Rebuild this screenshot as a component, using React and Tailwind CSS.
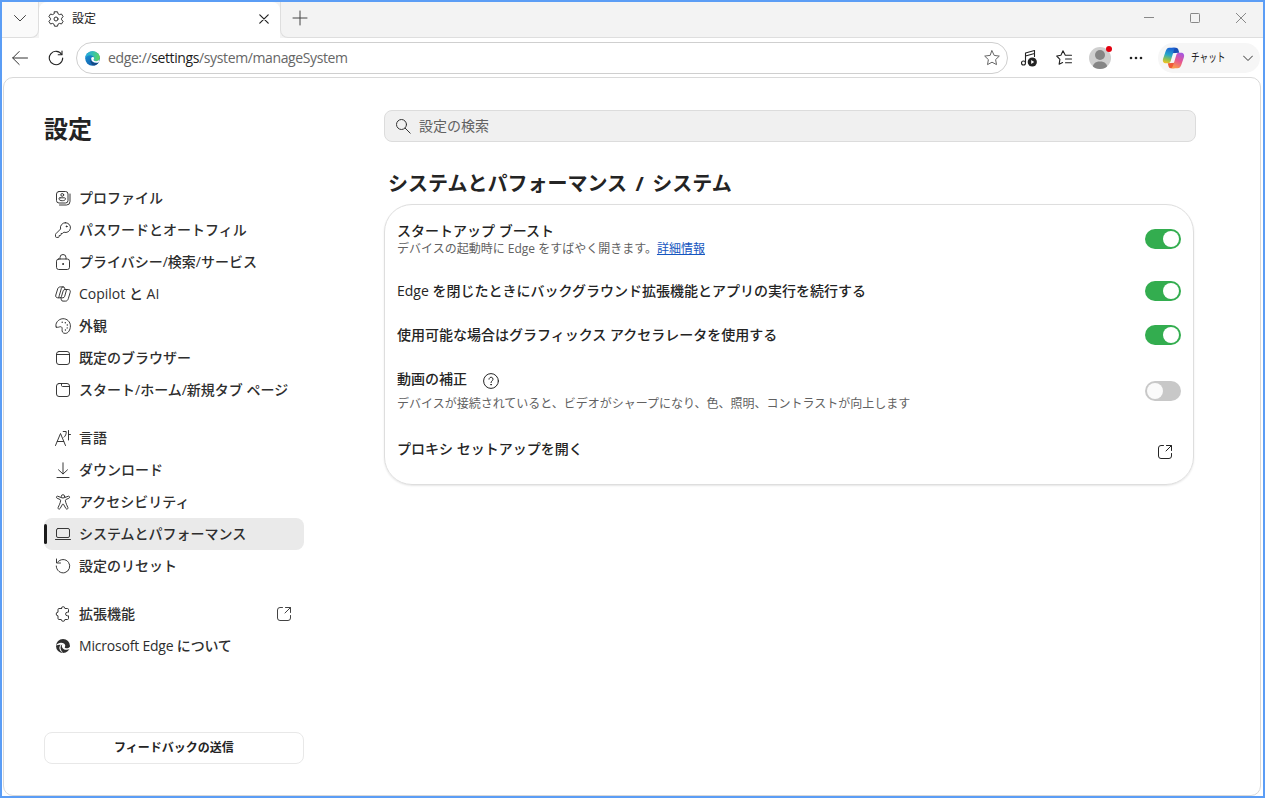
import React, { useState } from 'react';

const Icon = ({ children, size = 16, box = 16, sw = 1, className = '' }) => (
  <svg
    width={size}
    height={size}
    viewBox={`0 0 ${box} ${box}`}
    fill="none"
    stroke="currentColor"
    strokeWidth={sw}
    strokeLinecap="round"
    strokeLinejoin="round"
    className={`shrink-0 ${className}`}
  >
    {children}
  </svg>
);

const icons = {
  profile: (
    <>
      <rect x="1.5" y="1.5" width="11.5" height="11.5" rx="2.5" />
      <path d="M15 4v7.5a3.5 3.5 0 0 1-3.5 3.5H4.5" />
      <circle cx="7.25" cy="4.9" r="1.4" />
      <path d="M5 7.8h4.5c.6 0 1 .4 1 .9 0 1.4-1.4 2-3.25 2S4 10.1 4 8.7c0-.5.4-.9 1-.9Z" />
    </>
  ),
  key: (
    <>
      <path d="M10.3.7a4.900 4.900 0 0 0-4.700 6.300L.8 11.800c-.2.200-.3.400-.3.700v1.900c0 .6.400 1 1 1h1.700c.6 0 1-.4 1-1v-.9h1c.5 0 .9-.4.9-.9v-1.100h1c.3 0 .5-.1.7-.3l1.100-1a4.900 4.900 0 1 0 1.400-9.500Z" />
      <circle cx="11.6" cy="4.4" r=".5" fill="currentColor" />
    </>
  ),
  lock: (
    <>
      <rect x="1.5" y="5" width="13" height="10.5" rx="2.2" />
      <path d="M5 5V3.500a3 3 0 0 1 6 0V5" />
      <circle cx="8" cy="10" r=".5" fill="currentColor" />
    </>
  ),
  copilot: (
    <>
      <path d="M10 3.500 9.700 2.100A1.700 1.700 0 0 0 8 .9H5.300C4 .9 3.100 1.600 2.700 2.900L.8 9c-.5 1.600.4 2.800 1.900 2.800h1.800c1 0 1.700-.5 2-1.500L8.200 4.800c.3-.9.900-1.300 1.800-1.300h3.300c1.500 0 2.400 1.200 1.900 2.800l-1.900 6.400c-.4 1.300-1.300 2.400-2.600 2.400H8a1.700 1.700 0 0 1-1.700-1.200L5.800 11.500" />
      <path d="M8.200.9C7.300.9 6.700 1.400 6.400 2.300L4.200 9.800c-.3.900-.3 1.400-.3 2M11.600 3.500 9.700 10.300c-.3.900-.9 1.500-1.800 1.500H6" />
    </>
  ),
  palette: (
    <>
      <path d="M1.2 9.100C-.4 5.600 3.200.9 7.900.7c4.300-.1 7.500 3.200 7.500 7.200 0 4.100-2.200 7.500-5.200 7.500-2.500 0-3.400-1.900-3.100-4 .2-1.600-.3-2.700-1.500-2.700-1.300 0-2.700 1.200-4.400.4Z" />
      <g fill="currentColor" stroke="none">
        <circle cx="7.2" cy="4.2" r=".7" />
        <circle cx="10.3" cy="4.7" r=".7" />
        <circle cx="12.3" cy="7" r=".7" />
        <circle cx="12.2" cy="9.9" r=".7" />
        <circle cx="10.4" cy="12" r=".7" />
      </g>
    </>
  ),
  browser: (
    <>
      <rect x="1.5" y="1.5" width="13" height="13" rx="2.5" />
      <path d="M1.500 4.500h13" />
    </>
  ),
  page: (
    <>
      <rect x="1.5" y="1.5" width="13" height="13" rx="2.5" />
      <path d="M6.500 1.500v2c0 .6.400 1 1 1h7" />
    </>
  ),
  language: (
    <>
      <path d="M.5 15.500 5.500 3.500l5 12M2.300 11.500h6.400" />
      <path d="M8.200 1.500h3c.2 2.500-.7 4.500-2.200 5.700M13.500.5v9.500M13.500 4.500h2" />
    </>
  ),
  download: <path d="M8 .8v11M3.500 7.800 8 12l4.500-4.200M2 15.500h12" />,
  accessibility: (
    <>
      <circle cx="8" cy="2.400" r="1.700" />
      <path d="M6.300 3.600 3 2.300c-1.500-.6-2.300 1.300-.9 1.900L5 5.500c.5.200.7.600.6 1.100-.2 2.500-1.700 4.900-2.500 7-.5 1.400 1.500 2.100 2 .9L7.500 10.300c.2-.5.800-.5 1 0l2.400 4.200c.5 1.200 2.500.5 2-.9-.8-2.100-2.300-4.500-2.500-7-.1-.5.1-.9.600-1.100l2.900-1.300c1.400-.6.600-2.500-.9-1.900L9.700 3.600" />
    </>
  ),
  laptop: (
    <>
      <rect x="1.5" y="2.500" width="13" height="9" rx="1.500" />
      <path d="M.5 13.500h15" />
    </>
  ),
  reset: (
    <>
      <path d="M2.600 4.200A6.700 6.700 0 1 1 1.300 8" />
      <path d="M1.500 1v4h4" />
    </>
  ),
  puzzle: (
    <path d="M6.300 2.500a1.800 1.800 0 0 1 3.600 0h2.600c.6 0 1 .4 1 1v2.700h-1.100a1.700 1.700 0 0 0 0 3.600h1.100v2.700c0 .6-.4 1-1 1H9.900a1.800 1.800 0 0 1-3.600 0H4c-.6 0-1-.4-1-1V9.800a1.800 1.800 0 0 1 0-3.600V3.500c0-.6.4-1 1-1h2.300Z" />
  ),
  edge: (
    <>
      <circle cx="8" cy="8" r="7" fill="currentColor" stroke="none" />
      <path d="M1.200 7.500C2.500 4.800 6.500 3.800 9 5.600c1.600 1.200 1.500 2.800.8 3.600-.2.700.9 1.300 2.700 1.100 1.200-.2 2.300-.9 2.800-1.700l-.4 2.500c-3.600 1.700-7.600.3-8-2.400-.1-1 .2-1.800.7-2.200-2.400.4-3.200 5.400.7 8.300-2.600-.9-4.400-3.500-3.800-5.800.2-1 .6-1.700 1.200-2.300-1.700-.2-3.200.400-4.500.8Z" fill="#fff" stroke="none" />
    </>
  ),
  external: (
    <>
      <path d="M6.500 1.500H4A2.500 2.500 0 0 0 1.500 4v8A2.500 2.500 0 0 0 4 14.500h8a2.500 2.500 0 0 0 2.500-2.500V9.500" />
      <path d="M9.500 1.500h5v5M14.300 1.700 9 7" />
    </>
  )
};

const menuGroups = [
  [
    { id: 'profile', name: 'プロファイル' },
    { id: 'key', name: 'パスワードとオートフィル' },
    { id: 'lock', name: 'プライバシー/検索/サービス' },
    { id: 'copilot', name: 'Copilot と AI' },
    { id: 'palette', name: '外観' },
    { id: 'browser', name: '既定のブラウザー' },
    { id: 'page', name: 'スタート/ホーム/新規タブ ページ' }
  ],
  [
    { id: 'language', name: '言語' },
    { id: 'download', name: 'ダウンロード' },
    { id: 'accessibility', name: 'アクセシビリティ' },
    { id: 'laptop', name: 'システムとパフォーマンス' },
    { id: 'reset', name: '設定のリセット' }
  ],
  [
    { id: 'puzzle', name: '拡張機能', external: true },
    { id: 'edge', name: 'Microsoft Edge について', tight: true }
  ]
];

const EdgeLogo = () => (
  <svg width="15" height="15" viewBox="0 0 16 16" className="shrink-0">
    <defs>
      <linearGradient id="edgeTop" x1="0" y1="0.5" x2="1" y2="0.6">
        <stop offset="0" stopColor="#27a9df" />
        <stop offset="0.5" stopColor="#35c1b0" />
        <stop offset="1" stopColor="#5fd65b" />
      </linearGradient>
      <linearGradient id="edgeLeft" x1="0" y1="0" x2="0.6" y2="1">
        <stop offset="0" stopColor="#1f9ad8" />
        <stop offset="1" stopColor="#0f5fae" />
      </linearGradient>
    </defs>
    <circle cx="8" cy="8" r="7.8" fill="url(#edgeLeft)" />
    <path d="M.3 7.500C.7 3.300 4 .2 8 .2c4.600 0 7.800 3.300 7.800 6.700 0 2.400-1.900 3.900-4 3.900-1.800 0-2.700-.7-2.700-1.200 0-.4.600-.7.600-1.800C9.700 5.900 7.900 4.500 5.600 4.500 3.300 4.500 1.300 5.800.3 7.500Z" fill="url(#edgeTop)" />
    <path d="M6.500 7.600C4.700 10 6.400 14.800 10 15.500c2.200-.5 3.900-1.800 4.900-3.500-3.900 2-8.700.1-8.400-4.400Z" fill="#144a86" />
    <path d="M9.700 7.800c0 1.100-.6 1.400-.6 1.800 0 .5.900 1.200 2.700 1.200 1.400 0 2.700-.6 3.400-1.700-.1 1.100-.2 2.100-.5 2.900-3.200 1.500-7.700.1-8.100-3.500 0-1 .5-2 1.500-2 .9 0 1.600.5 1.600 1.300Z" fill="#fff" />
  </svg>
);

const CopilotLogo = () => (
  <svg width="23" height="22" viewBox="0 0 24 22" className="shrink-0">
    <defs>
      <linearGradient id="cpA" x1="0.5" y1="0" x2="0.3" y2="1">
        <stop offset="0" stopColor="#1b62d6" />
        <stop offset="0.45" stopColor="#25a6c9" />
        <stop offset="0.75" stopColor="#8ec152" />
        <stop offset="1" stopColor="#f4c321" />
      </linearGradient>
      <linearGradient id="cpB" x1="0.7" y1="0" x2="0.3" y2="1">
        <stop offset="0" stopColor="#a657e0" />
        <stop offset="0.5" stopColor="#e8568f" />
        <stop offset="1" stopColor="#fa9c47" />
      </linearGradient>
    </defs>
    <path d="M18 5.500 17 2A2.500 2.500 0 0 0 14.600.3H11L10 6Z" fill="#194fb5" />
    <path d="M6 16.500 7 20a2.500 2.500 0 0 0 2.400 1.700H13L14 16Z" fill="#ef5a36" />
    <path d="M14 .3H7.500C5.600.3 4.400 2 3.800 4L1.200 11.500c-.9 2.800.2 5 3 5h2c1.400 0 2.400-.8 2.800-2.100l2.900-9.600C12.500 2.500 12.800.9 14 .3Z" fill="url(#cpA)" />
    <path d="M9.500 21.700H16c2.500 0 3.600-1.700 4.200-3.700l2.600-7.500c.9-2.800-.2-5-3-5h-2c-1.400 0-2.400.8-2.800 2.100l-2.900 9.600c-.7 2.300-1.400 4.200-2.600 4.500Z" fill="url(#cpB)" />
  </svg>
);

const Toggle = ({ on, onClick }) => (
  <button
    onClick={onClick}
    className={`flex h-5 w-9 shrink-0 items-center rounded-full px-0.5 ${on ? 'justify-end bg-[#33ad4f]' : 'justify-start bg-[#c8c8c8]'}`}
  >
    <span className={`h-4 w-4 rounded-full ${on ? 'bg-white' : 'bg-[#fafafa]'}`} />
  </button>
);

const TabBar = () => (
  <div className="flex h-9 shrink-0 bg-[#f3f3f3]">
    <div className="flex w-[37px] items-center justify-center rounded-br-lg border-r border-b border-[#dedede] bg-[#fafafa] pb-1">
      <Icon size={14} box={14} className="text-[#444]">
        <path d="m1.500 4.500 5.500 5.500 5.500-5.500" />
      </Icon>
    </div>
    <div className="flex w-[241px] items-center rounded-t-lg bg-white pl-[9px] pr-[11px] pb-[3px]">
      <Icon box={16} className="text-[#333]">
        <path d="M6.500.8h3l.5 2 1.500.8 2-.6 1.600 2.700-1.500 1.500v1.600l1.500 1.500-1.600 2.700-2-.6-1.500.8-.5 2h-3l-.5-2-1.500-.8-2 .6L.9 10.300l1.500-1.500V7.200L.9 5.700 2.500 3l2 .6L6 2.800Z" />
        <circle cx="8" cy="8" r="2" />
      </Icon>
      <span className="ml-2 grow text-xs text-[#222]">設定</span>
      <Icon size={10} box={10} sw={1.2} className="text-[#222]">
        <path d="m.8.8 8.400 8.400M9.200.8.8 9.200" />
      </Icon>
    </div>
    <div className="flex grow items-center rounded-bl-lg border-b border-l border-[#dedede] pb-[3px]">
      <Icon size={16} className="ml-[11px] text-[#444]">
        <path d="M8 1v14M1 8h14" />
      </Icon>
      <div className="ml-auto flex items-center gap-9 pr-[17px] text-[#888]">
        <Icon size={10} box={10}>
          <path d="M0 4.500h10" />
        </Icon>
        <Icon size={10} box={10}>
          <rect x=".5" y=".5" width="9" height="9" rx=".8" />
        </Icon>
        <Icon size={10} box={10}>
          <path d="m.3.3 9.400 9.400M9.700.3.3 9.700" />
        </Icon>
      </div>
    </div>
  </div>
);

const Toolbar = () => (
  <div className="flex h-[39px] shrink-0 items-center bg-white pl-2.5 pr-[3px] pt-px">
    <Icon className="text-[#333]">
      <path d="M15.500 8H.8M7.200 1.500.7 8l6.500 6.500" />
    </Icon>
    <Icon className="ml-5 text-[#222]" sw={1.1}>
      <path d="M13.700 4.500A6.700 6.700 0 1 0 14.700 8" />
      <path d="M14 1v3.800h-3.800" />
    </Icon>
    <div className="ml-3 flex h-8 w-[932px] items-center rounded-full border border-[#cfcfcf] pl-2">
      <EdgeLogo />
      <span className="ml-2 grow text-sm tracking-[-0.38px] whitespace-nowrap text-[#666]">
        edge://<span className="text-[#1c1c1c]">settings</span>/system/manageSystem
      </span>
      <Icon className="mr-[7px] text-[#666]">
        <path d="m8 .8 2.200 4.600 5.100.7-3.700 3.500.9 5L8 12.200l-4.500 2.400.9-5L.7 6.100l5.100-.7Z" />
      </Icon>
    </div>
    <Icon size={18} box={18} className="ml-3 text-[#222]" sw={1.1}>
      <path d="M5.500 13.500V4l9-2.500v6M5.500 7l9-2.500" />
      <circle cx="3.500" cy="14" r="2" />
      <circle cx="12.300" cy="13" r="4.600" fill="currentColor" stroke="none" />
      <path d="M11.200 11v4l3-2Z" fill="#fff" stroke="none" />
    </Icon>
    <Icon className="ml-[18px] text-[#222]" sw={1.1}>
      <path d="M10 5.300h-.7L7 .8 4.900 5.300.7 6l3.200 3.300-.8 5 3.500-1.800M10.500 5.300h5M9.500 9h6M9.500 12.700h6" />
    </Icon>
    <div className="relative ml-[17px] h-[22px] w-[22px]">
      <div className="h-full w-full overflow-hidden rounded-full bg-[#cfcfcf]">
        <svg width="22" height="22" viewBox="0 0 22 22" fill="#858585">
          <circle cx="11" cy="8" r="5" />
          <path d="M3.500 22c0-5 2.500-7.500 7.500-7.500s7.500 2.500 7.500 7.500Z" />
        </svg>
      </div>
      <span className="absolute -top-px -right-px h-1.5 w-1.5 rounded-full bg-[#e3000f]" />
    </div>
    <svg width="14" height="4" viewBox="0 0 14 4" className="ml-[18px] fill-[#222]">
      <circle cx="2" cy="2" r="1.3" />
      <circle cx="7" cy="2" r="1.3" />
      <circle cx="12" cy="2" r="1.3" />
    </svg>
    <div className="ml-auto flex h-[30px] w-[102px] items-center rounded-full bg-[#f6f6f6] pl-1">
      <CopilotLogo />
      <span className="ml-1.5 w-[43px] text-xs whitespace-nowrap text-[#222]">
        <span className="inline-block origin-left scale-x-[0.72]">チャット</span>
      </span>
      <Icon size={10} box={10} className="ml-[9px] text-[#333]">
        <path d="M.5 3 5 7.500 9.500 3" />
      </Icon>
    </div>
  </div>
);

const Sidebar = () => {
  const [activeItem, setActiveItem] = useState('laptop');

  return (
    <div className="flex w-[260px] shrink-0 flex-col">
      <h1 className="mt-8 h-[39px] text-2xl leading-[38px] font-bold text-[#242424]">設定</h1>
      <nav className="mt-[33px] flex flex-col gap-4">
        {menuGroups.map((group, index) => (
          <div key={index}>
            {group.map((item) => (
              <button
                key={item.id}
                onClick={() => setActiveItem(item.id)}
                className={`relative flex h-8 w-full items-center rounded-lg pl-[11px] pr-3 text-sm font-medium whitespace-nowrap text-[#2e2e2e] ${
                  activeItem === item.id ? 'bg-[#eaeaea]' : ''
                }`}
              >
                {activeItem === item.id && (
                  <span className="absolute top-1.5 left-0 h-5 w-[3px] rounded-full bg-[#1b1b1b]" />
                )}
                <Icon sw={0.95}>{icons[item.id]}</Icon>
                <span className={`ml-2 grow pb-px text-left ${item.tight ? 'tracking-[-0.2px]' : ''}`}>{item.name}</span>
                {item.external && <Icon sw={0.9}>{icons.external}</Icon>}
              </button>
            ))}
          </div>
        ))}
      </nav>
      <button className="mt-auto mb-[31px] h-8 rounded-lg border border-[#e8e8e8] text-xs font-bold text-[#242424]">
        フィードバックの送信
      </button>
    </div>
  );
};

const SystemSettings = () => {
  const [boost, setBoost] = useState(true);
  const [background, setBackground] = useState(true);
  const [graphics, setGraphics] = useState(true);
  const [video, setVideo] = useState(false);

  return (
    <div className="ml-20 w-[812px] pt-8">
      {/* Search */}
      <div className="flex h-8 items-center rounded-lg border border-[#dcdcdc] bg-[#f0f0f0] px-2.5 text-[#333]">
        <Icon>
          <circle cx="6.500" cy="6.500" r="5" />
          <path d="m10.200 10.200 5 5" />
        </Icon>
        <span className="ml-2 pb-px text-sm text-[#616161]">設定の検索</span>
      </div>

      <h2 className="mt-[26px] ml-1 h-9 text-xl leading-[31px] font-bold whitespace-nowrap text-[#242424]">
        システムとパフォーマンス<span className="mx-[3.3px]"> / </span>システム
      </h2>

      {/* Settings card */}
      <div className="flex h-[281px] w-[810px] flex-col rounded-[28px] border border-[#dedede] pt-1 pr-3 pl-3 text-sm font-medium text-[#242424] shadow-[0_1px_2px_rgba(0,0,0,0.1)]">
        <div className="flex h-[60px] items-center justify-between">
          <div className="pt-0.5">
            <div className="h-[18px] leading-[18px]">スタートアップ ブースト</div>
            <div className="h-[18px] text-xs leading-[18px] font-normal text-[#616161]">
              デバイスの起動時に Edge をすばやく開きます。
              <a className="text-[#1556c0] underline" href="#">詳細情報</a>
            </div>
          </div>
          <Toggle on={boost} onClick={() => setBoost(!boost)} />
        </div>
        <div className="flex h-11 items-center justify-between">
          <span>Edge を閉じたときにバックグラウンド拡張機能とアプリの実行を続行する</span>
          <Toggle on={background} onClick={() => setBackground(!background)} />
        </div>
        <div className="flex h-11 items-center justify-between">
          <span>使用可能な場合はグラフィックス アクセラレータを使用する</span>
          <Toggle on={graphics} onClick={() => setGraphics(!graphics)} />
        </div>
        <div className="flex h-[68px] items-center justify-between">
          <div className="pt-px">
            <div className="flex h-6 items-center pt-px">
              <span className="pb-1 leading-5">動画の補正</span>
              <Icon className="ml-4" sw={1}>
                <circle cx="8" cy="8" r="7.4" />
                <path d="M6 6.200c0-2.700 4-2.700 4 0C10 7.800 8 7.900 8 9.600" />
                <circle cx="8" cy="11.700" r=".3" fill="currentColor" />
              </Icon>
            </div>
            <div className="mt-px h-[22px] text-xs leading-[22px] font-normal text-[#616161]">
              デバイスが接続されていると、ビデオがシャープになり、色、照明、コントラストが向上します
            </div>
          </div>
          <Toggle on={video} onClick={() => setVideo(!video)} />
        </div>
        <div className="flex h-12 items-center justify-between pr-2">
          <span>プロキシ セットアップを開く</span>
          <Icon className="mt-1.5">{icons.external}</Icon>
        </div>
      </div>
    </div>
  );
};

const App = () => {
  return (
    <div className="flex h-[798px] w-[1265px] flex-col overflow-hidden border-2 border-[#5b9df5] bg-white font-['Open_Sans','Noto_Sans_CJK_JP',sans-serif]">
      <TabBar />
      <Toolbar />
      <div className="mr-0.5 ml-px flex grow rounded-[10px] border border-[#d9d9d9] pl-10">
        <Sidebar />
        <SystemSettings />
      </div>
    </div>
  );
};

export default App;
